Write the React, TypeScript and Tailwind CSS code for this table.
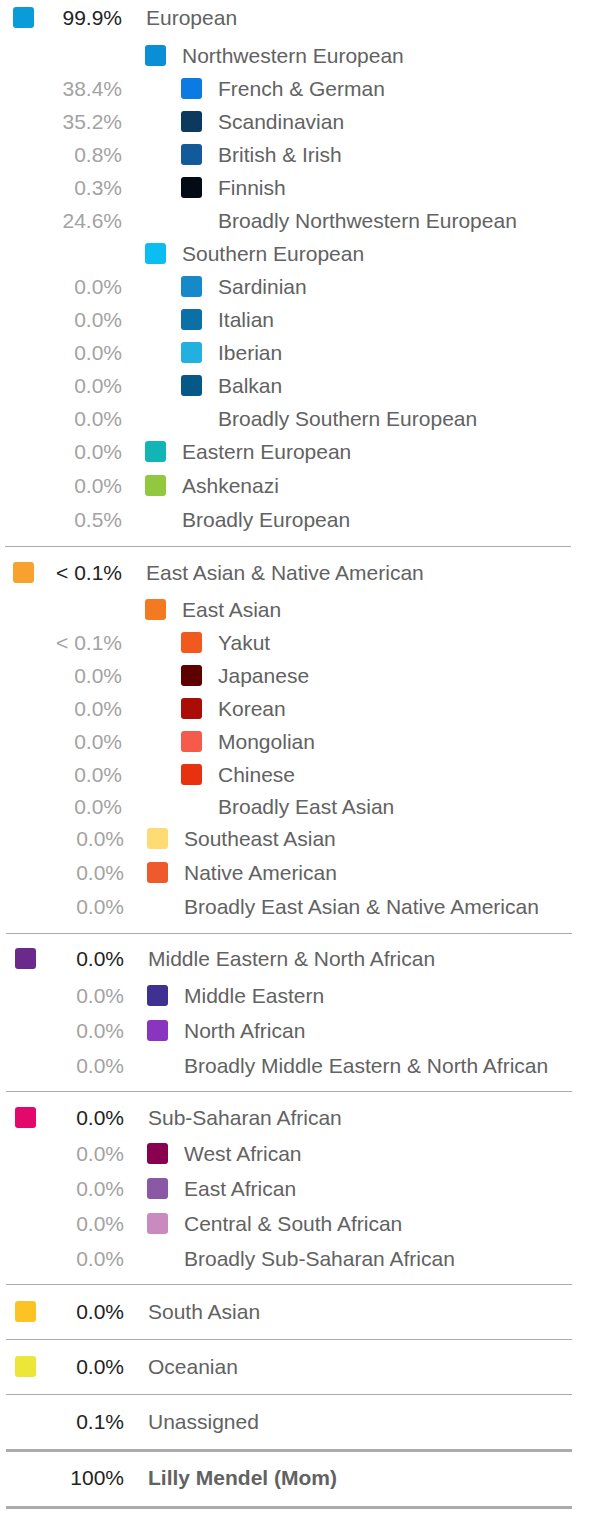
import React from 'react';

type Item = {
  level: 0 | 1 | 2;
  color?: string;
  pct?: string;
  label: string;
  h?: number;
  mt?: number;
  shift?: boolean;
};

const europe: Item[] = [
  { level: 0, color: '#0a9bd9', pct: '99.9%', label: 'European', h: 36 },
  { level: 1, color: '#0a8fd6', label: 'Northwestern European', mt: 4 },
  { level: 2, color: '#0b7be3', pct: '38.4%', label: 'French & German' },
  { level: 2, color: '#0c3a5f', pct: '35.2%', label: 'Scandinavian' },
  { level: 2, color: '#125a99', pct: '0.8%', label: 'British & Irish' },
  { level: 2, color: '#020b16', pct: '0.3%', label: 'Finnish' },
  { level: 2, pct: '24.6%', label: 'Broadly Northwestern European' },
  { level: 1, color: '#0bbdf0', label: 'Southern European' },
  { level: 2, color: '#1589c9', pct: '0.0%', label: 'Sardinian' },
  { level: 2, color: '#0b70a6', pct: '0.0%', label: 'Italian' },
  { level: 2, color: '#22b0df', pct: '0.0%', label: 'Iberian' },
  { level: 2, color: '#065887', pct: '0.0%', label: 'Balkan' },
  { level: 2, pct: '0.0%', label: 'Broadly Southern European' },
  { level: 1, color: '#12b5b5', pct: '0.0%', label: 'Eastern European' },
  { level: 1, color: '#92c840', pct: '0.0%', label: 'Ashkenazi', h: 34 },
  { level: 1, pct: '0.5%', label: 'Broadly European', h: 35 },
];

const eastAsia: Item[] = [
  { level: 0, color: '#f9a12e', pct: '< 0.1%', label: 'East Asian & Native American', h: 35 },
  { level: 1, color: '#f47a22', label: 'East Asian', mt: 3 },
  { level: 2, color: '#f15a1e', pct: '< 0.1%', label: 'Yakut' },
  { level: 2, color: '#5c0000', pct: '0.0%', label: 'Japanese' },
  { level: 2, color: '#aa0d05', pct: '0.0%', label: 'Korean' },
  { level: 2, color: '#f55a4a', pct: '0.0%', label: 'Mongolian' },
  { level: 2, color: '#e8320f', pct: '0.0%', label: 'Chinese' },
  { level: 2, pct: '0.0%', label: 'Broadly East Asian', h: 30 },
  { level: 1, color: '#ffdc73', pct: '0.0%', label: 'Southeast Asian', h: 34, shift: true },
  { level: 1, color: '#ef5a2c', pct: '0.0%', label: 'Native American', h: 35, shift: true },
  { level: 1, pct: '0.0%', label: 'Broadly East Asian & Native American', h: 33, shift: true },
];

const mena: Item[] = [
  { level: 0, color: '#6b2a8b', pct: '0.0%', label: 'Middle Eastern & North African', h: 35, shift: true },
  { level: 1, color: '#3f3192', pct: '0.0%', label: 'Middle Eastern', h: 35, mt: 2, shift: true },
  { level: 1, color: '#8a35c0', pct: '0.0%', label: 'North African', h: 35, shift: true },
  { level: 1, pct: '0.0%', label: 'Broadly Middle Eastern & North African', h: 35, shift: true },
];

const africa: Item[] = [
  { level: 0, color: '#e2096a', pct: '0.0%', label: 'Sub-Saharan African', h: 36, shift: true },
  { level: 1, color: '#8a0050', pct: '0.0%', label: 'West African', h: 35, mt: 1, shift: true },
  { level: 1, color: '#8b58a6', pct: '0.0%', label: 'East African', h: 35, shift: true },
  { level: 1, color: '#c98ac0', pct: '0.0%', label: 'Central & South African', h: 35, shift: true },
  { level: 1, pct: '0.0%', label: 'Broadly Sub-Saharan African', h: 35, shift: true },
];

const Swatch = ({ color }: { color?: string }) =>
  color ? (
    <div className="w-[21px] h-[21px] rounded-[3px] shrink-0" style={{ backgroundColor: color }} />
  ) : (
    <div className="w-[21px] h-[21px] shrink-0" />
  );

const Row = ({ item }: { item: Item }) => {
  const main = item.level === 0;
  return (
    <div
      className={`flex items-center pb-[2px] ${item.shift ? 'pl-[15px]' : 'pl-[13px]'}`}
      style={{ height: item.h ?? 33, marginTop: item.mt ?? 0 }}
    >
      <Swatch color={main ? item.color : undefined} />
      <div className={`w-[88px] shrink-0 text-right ${main ? 'text-[#222]' : 'text-[#a3a3a3]'}`}>
        {item.pct}
      </div>
      <div className="flex items-center pl-[23px]">
        {item.level === 2 && <div className="w-[36px] shrink-0" />}
        {item.level > 0 && (
          <>
            <Swatch color={item.color} />
            <div className="w-[16px] shrink-0" />
          </>
        )}
        <span className={`text-[#626262] whitespace-nowrap ${main ? 'ml-[1px]' : ''}`}>{item.label}</span>
      </div>
    </div>
  );
};

const Line = ({ shift, thick }: { shift?: boolean; thick?: boolean }) => (
  <div
    className={`w-[566px] bg-[#ababab] ${shift ? 'ml-[6px]' : 'ml-[5px]'} ${thick ? 'h-[3px]' : 'h-px'}`}
  />
);

const Single = ({ color, pct, label }: { color?: string; pct: string; label: string }) => (
  <div className="flex items-center pl-[15px] pb-[2px] h-[54px]">
    <Swatch color={color} />
    <div className="w-[88px] shrink-0 text-right text-[#222]">{pct}</div>
    <span className="pl-[24px] text-[#626262]">{label}</span>
  </div>
);

export default function App() {
  return (
    <div className="w-[596px] h-[1532px] bg-white font-['Liberation_Sans',Arial,sans-serif] text-[21px] leading-none">
      <div className="pb-[8px]">
        {europe.map((it, i) => (
          <Row key={i} item={it} />
        ))}
      </div>
      <Line />
      <div className="pt-[9px] pb-[9px]">
        {eastAsia.map((it, i) => (
          <Row key={i} item={it} />
        ))}
      </div>
      <Line shift />
      <div className="pt-[8px] pb-[7px]">
        {mena.map((it, i) => (
          <Row key={i} item={it} />
        ))}
      </div>
      <Line shift />
      <div className="pt-[8px] pb-[7px]">
        {africa.map((it, i) => (
          <Row key={i} item={it} />
        ))}
      </div>
      <Line shift />
      <Single color="#fdc325" pct="0.0%" label="South Asian" />
      <Line shift />
      <Single color="#ebe638" pct="0.0%" label="Oceanian" />
      <Line shift />
      <Single pct="0.1%" label="Unassigned" />
      <Line shift thick />
      <div className="flex items-center pl-[15px] pb-[3px] h-[54px]">
        <div className="w-[21px] shrink-0" />
        <div className="w-[88px] shrink-0 text-right text-[#222]">100%</div>
        <span className="pl-[24px] font-bold text-[#626262]">Lilly Mendel (Mom)</span>
      </div>
      <Line shift thick />
    </div>
  );
}
